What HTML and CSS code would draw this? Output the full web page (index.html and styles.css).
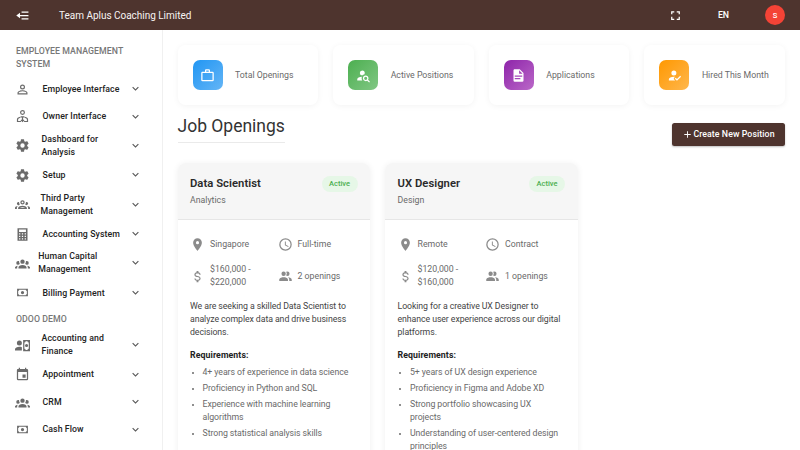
FILE: index.html
```html
<!DOCTYPE html>
<html lang="en">
<head>
<meta charset="utf-8">
<title>Job Openings</title>
<link rel="stylesheet" href="styles.css">
</head>
<body>
<svg width="0" height="0" class="defs">
  <symbol id="chev" viewBox="0 0 24 24"><path d="M7.41 8.58 12 13.17l4.59-4.59L18 10l-6 6-6-6z"/></symbol>
  <symbol id="cog" viewBox="0 0 24 24"><path d="M12 15.5A3.5 3.5 0 0 1 8.5 12 3.5 3.5 0 0 1 12 8.5a3.5 3.5 0 0 1 3.5 3.5 3.5 3.5 0 0 1-3.5 3.5m7.43-2.53c.04-.32.07-.64.07-.97s-.03-.66-.07-1l2.11-1.63c.19-.15.24-.42.12-.64l-2-3.46c-.12-.22-.39-.31-.61-.22l-2.49 1c-.52-.39-1.06-.73-1.69-.98l-.37-2.65A.506.506 0 0 0 14 2h-4c-.25 0-.46.18-.5.42l-.37 2.65c-.63.25-1.17.59-1.69.98l-2.49-1c-.22-.09-.49 0-.61.22l-2 3.46c-.13.22-.07.49.12.64L4.57 11c-.04.34-.07.67-.07 1s.03.65.07.97l-2.11 1.66c-.19.15-.25.42-.12.64l2 3.46c.12.22.39.3.61.22l2.49-1.01c.52.4 1.06.74 1.69.99l.37 2.65c.04.24.25.42.5.42h4c.25 0 .46-.18.5-.42l.37-2.65c.63-.26 1.17-.59 1.69-.99l2.49 1.01c.22.08.49 0 .61-.22l2-3.46c.12-.22.07-.49-.12-.64z"/></symbol>
  <symbol id="cash" viewBox="0 0 24 24"><path fill-rule="evenodd" d="M2 5h20v14H2zm4 2a2 2 0 0 1-2 2v6a2 2 0 0 1 2 2h12a2 2 0 0 1 2-2V9a2 2 0 0 1-2-2zm6 2a3 3 0 1 1 0 6 3 3 0 0 1 0-6z"/></symbol>
  <symbol id="group" viewBox="0 0 24 24"><path d="M12 5.5A3.5 3.5 0 0 1 15.500 9 3.500 3.500 0 0 1 12 12.500 3.500 3.500 0 0 1 8.500 9 3.500 3.500 0 0 1 12 5.500M5 8c.56 0 1.080.15 1.530.420-.15 1.430.27 2.850 1.130 3.960C7.160 13.340 6.160 14 5 14a3 3 0 0 1-3-3 3 3 0 0 1 3-3m14 0a3 3 0 0 1 3 3 3 3 0 0 1-3 3c-1.160 0-2.160-.66-2.660-1.620.86-1.110 1.280-2.530 1.130-3.960.45-.27.97-.42 1.530-.42M5.500 18.250c0-2.070 2.910-3.750 6.500-3.750s6.500 1.680 6.500 3.750V20h-13zM0 20v-1.500c0-1.390 1.890-2.560 4.450-2.900-.59.68-.95 1.620-.95 2.650V20zm24 0h-3.500v-1.750c0-1.030-.36-1.970-.95-2.650 2.560.34 4.450 1.510 4.450 2.900z"/></symbol>
  <symbol id="pin" viewBox="0 0 24 24"><path d="M12 11.500A2.500 2.500 0 0 1 9.500 9 2.500 2.500 0 0 1 12 6.500 2.500 2.500 0 0 1 14.500 9a2.500 2.500 0 0 1-2.500 2.500M12 2a7 7 0 0 0-7 7c0 5.250 7 13 7 13s7-7.750 7-13a7 7 0 0 0-7-7"/></symbol>
  <symbol id="clock" viewBox="0 0 24 24"><path d="M12 20a8 8 0 0 0 8-8 8 8 0 0 0-8-8 8 8 0 0 0-8 8 8 8 0 0 0 8 8m0-18a10 10 0 0 1 10 10 10 10 0 0 1-10 10C6.470 22 2 17.500 2 12A10 10 0 0 1 12 2m.5 5v5.250l4.500 2.670-.75 1.230L11 13V7z"/></symbol>
  <symbol id="usd" viewBox="0 0 24 24"><path d="M7 15h2c0 1.080 1.370 2 3 2s3-.92 3-2c0-1.100-1.040-1.500-3.240-2.030C9.640 12.440 7 11.780 7 9c0-1.790 1.470-3.310 3.500-3.820V3h3v2.180C15.530 5.690 17 7.210 17 9h-2c0-1.080-1.370-2-3-2s-3 .92-3 2c0 1.100 1.040 1.500 3.240 2.030C14.360 11.560 17 12.220 17 15c0 1.790-1.470 3.310-3.500 3.820V21h-3v-2.180C8.470 18.310 7 16.790 7 15"/></symbol>
  <symbol id="people" viewBox="0 0 24 24"><path d="M16 17v2H2v-2s0-4 7-4 7 4 7 4m-3.500-9.500A3.500 3.500 0 1 0 9 11a3.500 3.500 0 0 0 3.500-3.500m3.440 5.500A5.320 5.320 0 0 1 18 17v2h4v-2s0-3.630-6.060-4M15 4a3.390 3.390 0 0 0-1.930.59 5 5 0 0 1 0 5.820A3.390 3.390 0 0 0 15 11a3.500 3.500 0 0 0 0-7"/></symbol>
</svg>

<header class="topbar">
  <svg class="collapse" viewBox="0 0 24 24"><path d="M10.500 5.500H21.500v2H10.500zM10.500 11H21.500v2H10.500zM10.500 16.500H21.500v2H10.500zM8 7.500V11h3v2H8v3.500L2 12z"/></svg>
  <span class="brand">Team Aplus Coaching Limited</span>
  <svg class="full" viewBox="0 0 24 24"><path d="M5 5h5v2H7v3H5zm9 0h5v5h-2V7h-3zm3 9h2v5h-5v-2h3zm-7 3v2H5v-5h2v3z"/></svg>
  <span class="lang">EN</span>
  <span class="avatar">S</span>
</header>

<div class="shell">
<nav class="side">
  <h6 class="group-title">EMPLOYEE MANAGEMENT<br>SYSTEM</h6>
  <a class="item"><svg class="ico" viewBox="0 0 24 24"><path d="M12 13c-2.670 0-8 1.340-8 4v3h16v-3c0-2.660-5.330-4-8-4m6.100 5.100H5.900V17c0-.64 3.130-2.100 6.100-2.100s6.100 1.460 6.100 2.100zM12 4a4 4 0 1 0 0 8 4 4 0 0 0 0-8m0 6.100a2.100 2.100 0 1 1 0-4.200 2.100 2.100 0 0 1 0 4.200"/></svg><span class="label">Employee Interface</span><svg class="chev"><use href="#chev"/></svg></a>
  <a class="item"><svg class="ico" viewBox="0 0 24 24"><g fill="none" stroke="currentColor" stroke-width="1.900"><circle cx="12" cy="5.500" r="3"/><path d="M8.500 13.200c-2.800.7-4.500 2-4.500 3.400V20h5.500M15.500 13.200c2.800.7 4.500 2 4.500 3.400V20h-5.500M12 11.500v8M9 12.500h6M9.500 17.500l2.500 2.500 2.500-2.500"/></g></svg><span class="label">Owner Interface</span><svg class="chev"><use href="#chev"/></svg></a>
  <a class="item double"><svg class="ico"><use href="#cog"/></svg><span class="label in-1">Dashboard for<br>Analysis</span><svg class="chev"><use href="#chev"/></svg></a>
  <a class="item"><svg class="ico"><use href="#cog"/></svg><span class="label">Setup</span><svg class="chev"><use href="#chev"/></svg></a>
  <a class="item double"><svg class="ico" viewBox="0 0 24 24"><path d="M12 5a3.500 3.500 0 0 0-3.500 3.500A3.500 3.500 0 0 0 12 12a3.500 3.500 0 0 0 3.500-3.500A3.500 3.500 0 0 0 12 5m0 2a1.500 1.500 0 0 1 1.500 1.500A1.500 1.500 0 0 1 12 10a1.500 1.500 0 0 1-1.500-1.500A1.500 1.500 0 0 1 12 7M5.500 8A2.500 2.500 0 0 0 3 10.500c0 .94.53 1.750 1.290 2.180.36.2.77.32 1.210.32s.85-.12 1.210-.32c.37-.21.68-.51.91-.870A5.420 5.420 0 0 1 6.500 8.500v-.28c-.3-.14-.64-.22-1-.22m13 0c-.36 0-.7.080-1 .220v.28c0 1.200-.39 2.360-1.120 3.310A2.500 2.500 0 1 0 18.500 8M12 14c-2.340 0-7 1.170-7 3.500V19h14v-1.500c0-2.330-4.660-3.500-7-3.500m-7.290.550C2.780 14.780 0 15.760 0 17.500V19h3v-1.930c0-1.010.69-1.850 1.710-2.520m14.580 0C20.310 15.220 21 16.060 21 17.070V19h3v-1.500c0-1.740-2.780-2.720-4.710-2.950M12 16c1.530 0 3.240.5 4.230 1H7.770c.99-.5 2.700-1 4.230-1"/></svg><span class="label in-2">Third Party<br>Management</span><svg class="chev"><use href="#chev"/></svg></a>
  <a class="item"><svg class="ico" viewBox="0 0 24 24"><path fill-rule="evenodd" d="M4 2h16v20H4zM6.500 4v4h11V4zm0 6v2h2v-2zm4.500 0v2h2v-2zm4.500 0v2h2v-2zm-9 4v2h2v-2zm4.500 0v2h2v-2zm4.500 0v2h2v-2zm-9 4v2h2v-2zm4.500 0v2h2v-2zm4.500 0v2h2v-2z"/></svg><span class="label">Accounting System</span><svg class="chev"><use href="#chev"/></svg></a>
  <a class="item double"><svg class="ico"><use href="#group"/></svg><span class="label in-3">Human Capital<br>Management</span><svg class="chev"><use href="#chev"/></svg></a>
  <a class="item"><svg class="ico cash"><use href="#cash"/></svg><span class="label">Billing Payment</span><svg class="chev"><use href="#chev"/></svg></a>
  <h6 class="group-title second">ODOO DEMO</h6>
  <a class="item double"><svg class="ico" viewBox="0 0 24 24"><path fill-rule="evenodd" d="M7 4a4 4 0 1 1 0 8 4 4 0 0 1 0-8M0 20v-2c0-2.500 3.500-4 7-4 1.500 0 3 .2 4 .7V20zM13 3h11v18H13zm4 2a2 2 0 0 1-2 2v10a2 2 0 0 1 2 2h3a2 2 0 0 1 2-2V7a2 2 0 0 1-2-2zm1.500 4.500a2.500 2.500 0 1 1 0 5 2.500 2.500 0 0 1 0-5z"/></svg><span class="label in-1">Accounting and<br>Finance</span><svg class="chev"><use href="#chev"/></svg></a>
  <a class="item"><svg class="ico" viewBox="0 0 24 24"><path d="M19 19H5V8h14m-3-7v2H8V1H6v2H5c-1.110 0-2 .89-2 2v14a2 2 0 0 0 2 2h14a2 2 0 0 0 2-2V5a2 2 0 0 0-2-2h-1V1m-1 11h-5v5h5z"/></svg><span class="label">Appointment</span><svg class="chev"><use href="#chev"/></svg></a>
  <a class="item"><svg class="ico"><use href="#group"/></svg><span class="label">CRM</span><svg class="chev"><use href="#chev"/></svg></a>
  <a class="item"><svg class="ico cash"><use href="#cash"/></svg><span class="label">Cash Flow</span><svg class="chev"><use href="#chev"/></svg></a>
</nav>

<main class="main">
  <section class="stats">
    <div class="stat"><span class="tile blue"><svg viewBox="0 0 24 24"><path d="M20 6a2 2 0 0 1 2 2v11a2 2 0 0 1-2 2H4a2 2 0 0 1-2-2V8c0-1.110.89-2 2-2h4V4c0-1.110.89-2 2-2h4a2 2 0 0 1 2 2v2zM4 8v11h16V8zm10-2V4h-4v2z"/></svg></span><span class="stat-name">Total Openings</span></div>
    <div class="stat"><span class="tile green"><svg viewBox="0 0 24 24"><path d="M15.500 12c2.500 0 4.500 2 4.500 4.500 0 .88-.25 1.710-.69 2.400l3.080 3.100L21 23.390l-3.120-3.070c-.69.43-1.510.68-2.380.68-2.500 0-4.500-2-4.500-4.500s2-4.500 4.500-4.500m0 2a2.500 2.500 0 0 0-2.500 2.500 2.500 2.500 0 0 0 2.500 2.500 2.500 2.500 0 0 0 2.500-2.500 2.500 2.500 0 0 0-2.500-2.500M10 4a4 4 0 0 1 4 4c0 .91-.31 1.750-.82 2.430a6.500 6.500 0 0 0-3.360 1.560A4 4 0 0 1 10 4M2 20v-2c0-2.120 3.310-3.860 7.500-4-.32.780-.5 1.620-.5 2.500 0 1.290.38 2.490 1 3.500z"/></svg></span><span class="stat-name">Active Positions</span></div>
    <div class="stat"><span class="tile purple"><svg viewBox="0 0 24 24"><path d="M13 9h5.500L13 3.500zM6 2h8l6 6v12a2 2 0 0 1-2 2H6a2 2 0 0 1-2-2V4c0-1.110.89-2 2-2m9 16v-2H6v2zm3-4v-2H6v2z"/></svg></span><span class="stat-name">Applications</span></div>
    <div class="stat"><span class="tile orange"><svg viewBox="0 0 24 24"><path d="m21.100 12.500 1.400 1.410-6.530 6.590L12.500 17l1.400-1.410 2.070 2.080zM11 4a4 4 0 1 1 0 8 4 4 0 0 1 0-8m0 14 2 2H3v-2c0-2.210 3.580-4 8-4l1.890.11L11 16z"/></svg></span><span class="stat-name">Hired This Month</span></div>
  </section>

  <div class="heading">
    <h1>Job Openings</h1>
    <button class="create"><svg viewBox="0 0 24 24"><path d="M19 13h-6v6h-2v-6H5v-2h6V5h2v6h6z"/></svg><span>Create New Position</span></button>
  </div>

  <section class="jobs">
    <article class="job">
      <div class="job-head">
        <div class="job-title"><h2>Data Scientist</h2><span class="chip">Active</span></div>
        <p>Analytics</p>
      </div>
      <div class="job-body">
        <div class="facts">
          <div><svg><use href="#pin"/></svg><span>Singapore</span></div>
          <div><svg><use href="#clock"/></svg><span>Full-time</span></div>
          <div><svg><use href="#usd"/></svg><span>$160,000 -<br>$220,000</span></div>
          <div><svg><use href="#people"/></svg><span>2 openings</span></div>
        </div>
        <p class="desc">We are seeking a skilled Data Scientist to<br>analyze complex data and drive business<br>decisions.</p>
        <h3>Requirements:</h3>
        <ul>
          <li>4+ years of experience in data science</li>
          <li>Proficiency in Python and SQL</li>
          <li>Experience with machine learning<br>algorithms</li>
          <li>Strong statistical analysis skills</li>
        </ul>
      </div>
    </article>
    <article class="job">
      <div class="job-head">
        <div class="job-title"><h2>UX Designer</h2><span class="chip">Active</span></div>
        <p>Design</p>
      </div>
      <div class="job-body">
        <div class="facts">
          <div><svg><use href="#pin"/></svg><span>Remote</span></div>
          <div><svg><use href="#clock"/></svg><span>Contract</span></div>
          <div><svg><use href="#usd"/></svg><span>$120,000 -<br>$160,000</span></div>
          <div><svg><use href="#people"/></svg><span>1 openings</span></div>
        </div>
        <p class="desc">Looking for a creative UX Designer to<br>enhance user experience across our digital<br>platforms.</p>
        <h3>Requirements:</h3>
        <ul>
          <li>5+ years of UX design experience</li>
          <li>Proficiency in Figma and Adobe XD</li>
          <li>Strong portfolio showcasing UX<br>projects</li>
          <li>Understanding of user-centered design<br>principles</li>
        </ul>
      </div>
    </article>
  </section>
</main>
</div>
</body>
</html>
```
FILE: styles.css
```css
* { box-sizing: border-box; margin: 0; padding: 0; }
html, body { height: 450px; overflow: hidden; }
body { font: 400 8.75px/13.1px Roboto, sans-serif; color: #333; background: #fff; }
svg { fill: currentColor; flex: none; }
.defs { display: block; height: 0; }

.topbar { height: 30px; background: #4e342e; color: #fff; display: flex; align-items: center; padding-right: 15px; }
.collapse { width: 15px; height: 15px; margin-left: 15px; }
.brand { margin-left: 29px; padding-top: 1px; font-size: 10px; letter-spacing: -.02px; flex: 1; color: #f7f3f2; }
.full { width: 15px; height: 15px; }
.lang { margin-left: 27px; width: 28px; padding-top: 1px; text-align: center; font-weight: 500; }
.avatar { margin-left: 27.5px; width: 20px; height: 20px; border-radius: 50%; background: #f44336; text-align: center; line-height: 21px; font-size: 7.5px; font-weight: 500; }

.shell { display: flex; height: 420px; }
.side { width: 163px; border-right: 1px solid #f0f0f0; padding: 15px 15px 0; flex: none; }
.group-title { font-size: 8.75px; font-weight: 500; letter-spacing: .05px; color: #777; height: 30.25px; padding-left: 1px; white-space: nowrap; }
.group-title.second { height: 23px; padding-top: 6px; }
.item { display: flex; align-items: center; height: 27.5px; color: #222; }
.item.double { height: 31.25px; }
.ico { width: 15px; height: 15px; color: #6b6b6b; }
.ico.cash { width: 13px; height: 13px; margin: 0 1px; }
.label { flex: 1; margin-left: 12.5px; padding-top: .7px; font-weight: 500; letter-spacing: .08px; white-space: nowrap; }
.in-1 { margin-left: 11.5px; padding-top: 0; }
.in-2 { margin-left: 10.6px; padding-top: 0; }
.in-3 { margin-left: 8.3px; padding-top: 0; }
.chev { width: 13px; height: 13px; color: #555; margin: -1px 5px 0 0; }

.main { flex: 1; height: 420px; overflow: hidden; padding: 15px 15px 0 14.5px; }
.stats { display: grid; grid-template-columns: repeat(4, 1fr); gap: 15px; }
.stat { height: 60px; border-radius: 7.5px; box-shadow: 0 1px 6px rgba(0,0,0,.05); display: flex; align-items: center; padding-left: 15px; color: #6a6a6a; }
.stat-name { padding-top: 1px; }
.tile { width: 30px; height: 30px; border-radius: 7px; margin-right: 12.5px; display: flex; align-items: center; justify-content: center; color: #fff; }
.tile svg { width: 15px; height: 15px; }
.blue { background: linear-gradient(135deg, #2196f3, #64b5f6); }
.green { background: linear-gradient(135deg, #4caf50, #81c784); }
.purple { background: linear-gradient(135deg, #8e24aa, #ba68c8); }
.orange { background: linear-gradient(135deg, #ff9800, #ffb74d); }

.heading { display: flex; justify-content: space-between; height: 58px; padding-top: 10px; align-items: flex-start; }
h1 { font-size: 17.5px; line-height: 22px; font-weight: 400; color: #333; height: 28px; border-bottom: 1px solid #eaeaea; white-space: nowrap; }
.create { border: 0; margin-top: 8px; height: 23px; width: 113px; border-radius: 2.5px; background: #4e342e; color: #fff; font: 500 8.75px/13px Roboto, sans-serif; letter-spacing: .08px; display: flex; align-items: center; justify-content: center; box-shadow: 0 1px 2px rgba(0,0,0,.25); white-space: nowrap; }
.create svg { width: 11px; height: 11px; }
.create span { padding-top: .5px; }

.jobs { display: grid; grid-template-columns: repeat(3, 1fr); gap: 15px; }
.job { border-radius: 7.5px; box-shadow: 0 1px 6px rgba(0,0,0,.07); height: 330px; }
.job-head { height: 57px; background: #f6f6f6; border-bottom: 1px solid #e6e6e6; border-radius: 7.5px 7.5px 0 0; padding: 12.5px; }
.job-title { display: flex; justify-content: space-between; align-items: center; height: 16px; }
h2 { font-size: 11.25px; font-weight: 600; letter-spacing: .04px; color: #2a2a2a; padding-top: .5px; }
.chip { background: #e6f7e7; color: #4caf50; font-size: 7.5px; font-weight: 500; height: 16px; line-height: 16px; width: 36px; border-radius: 8px; text-align: center; }
.job-head p { margin-top: 2px; color: #6a6a6a; }
.job-body { padding: 12.500px; }
.facts { display: grid; grid-template-columns: 87.500px 1fr; grid-template-rows: 23px 41px; color: #6a6a6a; }
.facts div { display: flex; align-items: center; white-space: nowrap; }
.facts span { padding-top: .8px; }
.facts svg { width: 15px; height: 15px; margin-right: 5px; color: #8b8b8b; }
.desc { margin-top: 3px; color: #444; letter-spacing: -.08px; white-space: nowrap; }
h3 { font-size: 8.75px; line-height: 13px; font-weight: 700; color: #222; margin: 9.900px 0 4.800px; letter-spacing: .08px; }
ul { padding-left: 12.5px; color: #6a6a6a; letter-spacing: -.07px; }
li { margin-bottom: 2.600px; white-space: nowrap; }
li::marker { font-size: 7px; }
```
